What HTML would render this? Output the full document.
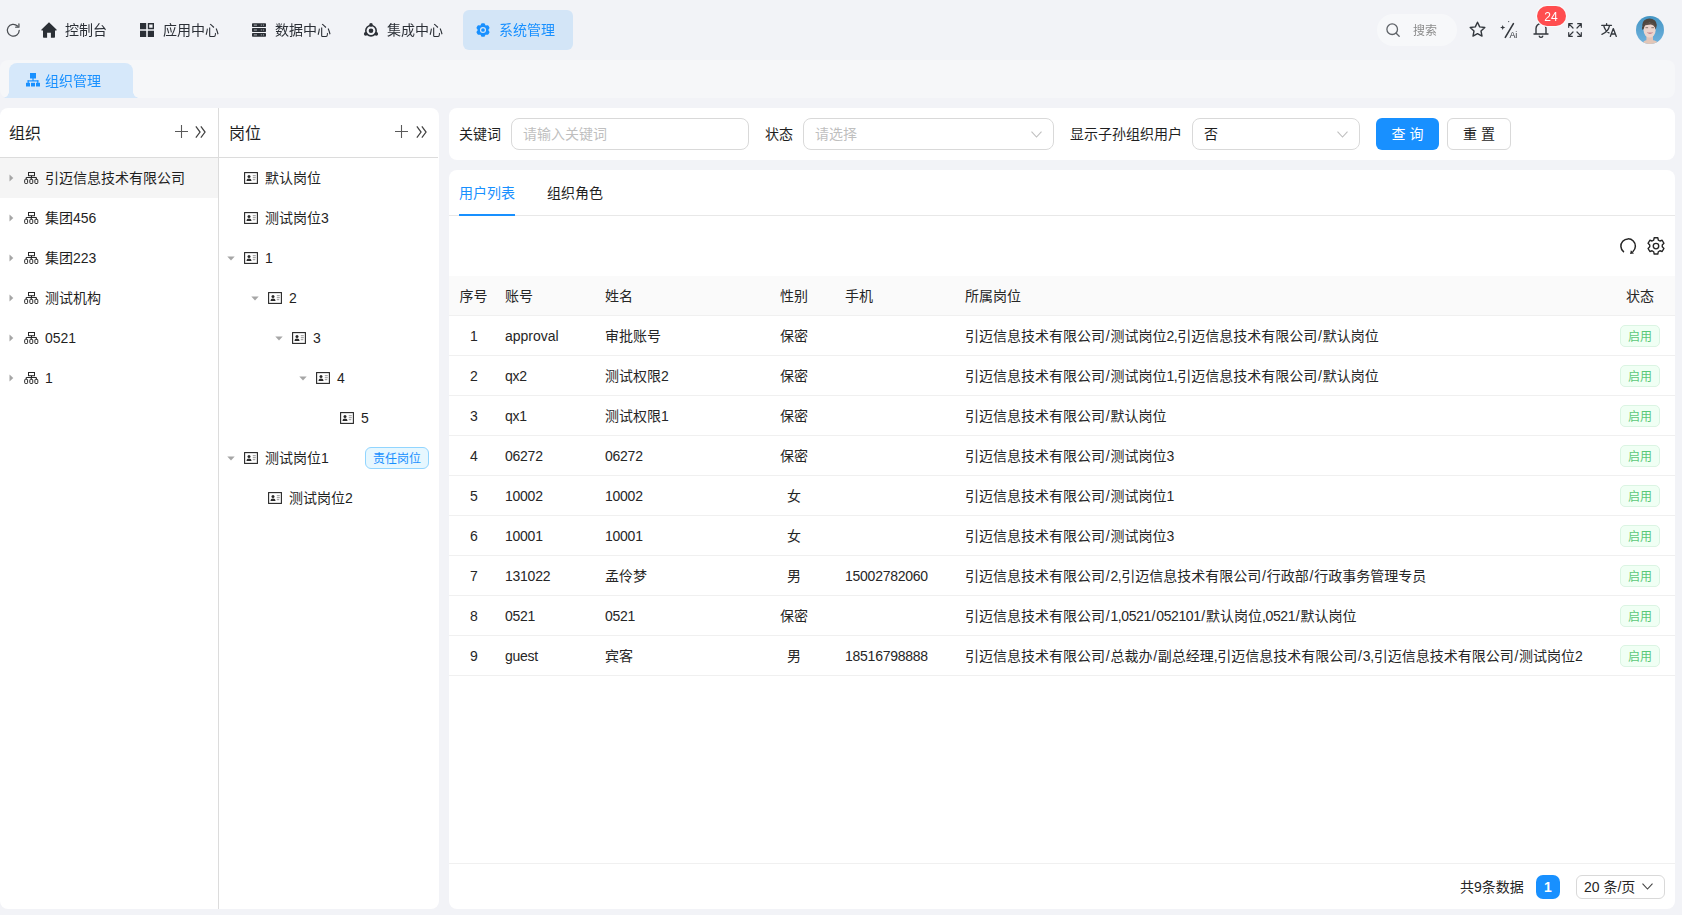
<!DOCTYPE html>
<html lang="zh-CN">
<head>
<meta charset="utf-8">
<title>组织管理</title>
<style>
*{box-sizing:border-box;margin:0;padding:0}
html,body{width:1682px;height:915px;overflow:hidden}
body{background:#f2f3f7;font-family:"Liberation Sans","Noto Sans CJK SC",sans-serif;font-size:14px;color:#1f1f1f;position:relative}
.abs{position:absolute}
svg{display:block;overflow:visible}
.t{position:absolute;white-space:nowrap;line-height:20px;font-size:14px}
.nav{position:absolute;left:0;top:0;width:1682px;height:60px;will-change:transform}
.nav .on{position:absolute;left:463px;top:10px;width:110px;height:40px;border-radius:6px;background:#d3e5f7}
.tabbar{will-change:transform;position:absolute;left:0;top:60px;width:1675px;height:38px;background:#f6f7f9;border-radius:8px}
.ptab{position:absolute;left:9px;top:3px;width:124px;height:35px;background:#d6e8fa;border-radius:8px 8px 0 0;color:#1890ff;font-size:14px}
.ptab:before,.ptab:after{content:"";position:absolute;bottom:0;width:6px;height:6px}
.ptab:before{left:-6px;background:radial-gradient(circle at 0 0,rgba(214,232,250,0) 5.5px,#d6e8fa 6px)}
.ptab:after{right:-6px;background:radial-gradient(circle at 100% 0,rgba(214,232,250,0) 5.5px,#d6e8fa 6px)}
.panel{position:absolute;background:#fff;border-radius:8px;overflow:hidden}
.inp{position:absolute;height:34px;border:1px solid #d9d9d9;border-radius:8px;background:#fff;font-size:14px;line-height:32px;padding-left:11px;color:#bfbfbf;white-space:nowrap}
.btn{position:absolute;height:34px;border-radius:6px;font-size:14px;line-height:32px;text-align:center;white-space:nowrap}
.tr{position:absolute;left:0;width:1226px;height:40px;border-bottom:1px solid #f0f0f0}
.tr span{position:absolute;top:0;line-height:41px;font-size:14px;color:#262626;white-space:nowrap}
.tr .tag{left:1171px;top:9px;width:40px;height:22px;border:1px solid #dbf5e3;background:#f0fff4;border-radius:5px;color:#5ac878;font-size:12px;line-height:22px;text-align:center}

.tr i{font-style:normal;padding:0 .78px}
.tr .n{letter-spacing:-.25px}
.tr b{font-weight:normal;letter-spacing:-.4px}

</style>
</head>
<body>
<div class="nav"><div class="on"></div>
<svg class="abs" style="left:5.800px;top:22.600px" width="14.600" height="14.600" viewBox="0 0 14 14" fill="none" stroke="#4a4d52" stroke-width="1.2" stroke-linecap="round" stroke-linejoin="round"><path d="M12.700 7a5.700 5.700 0 1 1-1.700-4.100"/><path d="M12.400 .9v3.100h-3.100"/></svg>
<svg class="abs" style="left:41px;top:21.700px" width="16" height="16.300" viewBox="0 0 16 16" preserveAspectRatio="none"><path d="M8 .3.500 7.300c-.4.400-.1 1 .4 1H2v6.200c0 .6.400 1 1 1h3.100V10.600h3.800v4.900H13c.6 0 1-.4 1-1V8.300h1.100c.5 0 .8-.6.400-1Z" fill="#2b2f36"/></svg>
<span class="t" style="left:65px;top:20px;font-size:14px;color:#2b2f36;">控制台</span>
<svg class="abs" style="left:140px;top:23px" width="14" height="14" viewBox="0 0 14 14"><path d="M0 0h6.200v6.200H0zM0 7.800h6.200V14H0zM7.800 7.800H14V14H7.800z" fill="#2b2f36"/><path d="M8.500 .7h4.800v4.800H8.500z" fill="none" stroke="#2b2f36" stroke-width="1.400"/></svg>
<span class="t" style="left:163px;top:20px;font-size:14px;color:#2b2f36;">应用中心</span>
<svg class="abs" style="left:252px;top:23px" width="14" height="14" viewBox="0 0 14 14"><g fill="#2b2f36"><rect x="0" y="0.200" width="14" height="3.800" rx=".7"/><rect x="0" y="5.100" width="14" height="3.800" rx=".7"/><rect x="0" y="10" width="14" height="3.800" rx=".7"/></g><g fill="#aeb1b6"><rect x="1.800" y="1.600" width="3.200" height="1"/><rect x="8.800" y="1.600" width="1.100" height="1"/><rect x="10.900" y="1.600" width="1.100" height="1"/><rect x="1.800" y="6.500" width="3.200" height="1"/><rect x="8.800" y="6.500" width="1.100" height="1"/><rect x="10.900" y="6.500" width="1.100" height="1"/><rect x="1.800" y="11.400" width="3.200" height="1"/><rect x="8.800" y="11.400" width="1.100" height="1"/><rect x="10.900" y="11.400" width="1.100" height="1"/></g></svg>
<span class="t" style="left:275px;top:20px;font-size:14px;color:#2b2f36;">数据中心</span>
<svg class="abs" style="left:364px;top:23px" width="14" height="14" viewBox="0 0 14 14"><circle cx="7" cy="7.700" r="5.200" fill="none" stroke="#2b2f36" stroke-width="1.600"/><circle cx="7" cy="7.700" r="2.300" fill="#2b2f36"/><circle cx="7" cy="1.900" r="1.800" fill="#2b2f36"/><circle cx="1.700" cy="10.900" r="1.800" fill="#2b2f36"/><circle cx="12.300" cy="10.900" r="1.800" fill="#2b2f36"/></svg>
<span class="t" style="left:387px;top:20px;font-size:14px;color:#2b2f36;">集成中心</span>
<svg class="abs" style="left:476px;top:23px" width="14" height="14" viewBox="0 0 14 14"><path d="M7.97 0.88 6.03 0.88 4.85 3.28 2.18 3.10 1.21 4.78 2.70 7.00 1.21 9.22 2.18 10.90 4.85 10.72 6.03 13.12 7.97 13.12 9.15 10.72 11.82 10.90 12.79 9.22 11.30 7.00 12.79 4.78 11.82 3.10 9.15 3.28Z" fill="#1890ff" stroke="#1890ff" stroke-width="1.500" stroke-linejoin="round"/><circle cx="7" cy="7" r="2.450" fill="none" stroke="#d3e5f7" stroke-width="1.200"/></svg>
<span class="t" style="left:499px;top:20px;font-size:14px;color:#1890ff;">系统管理</span>
<div class="abs" style="left:1377px;top:14px;width:80px;height:32px;border-radius:16px;background:#f7f8fa"></div>
<svg class="abs" style="left:1386px;top:23px" width="14" height="14" viewBox="0 0 14 14" fill="none" stroke="#5f6368" stroke-width="1.300" stroke-linecap="round"><circle cx="6.200" cy="6.200" r="5.300"/><path d="M10.200 10.200 13.200 13.200"/></svg>
<span class="t" style="left:1413px;top:20.5px;font-size:12px;color:#8c8c8c;">搜索</span>
<svg class="abs" style="left:1469px;top:21px" width="17" height="17" viewBox="0 0 17 17" fill="none" stroke="#33373d" stroke-width="1.400" stroke-linejoin="round"><path d="M8.500 1.200 10.700 5.900 15.800 6.500 12 10 13 15.100 8.500 12.600 4 15.100 5 10 1.200 6.500 6.300 5.900Z"/></svg>
<svg class="abs" style="left:1500px;top:20px" width="19" height="19" viewBox="0 0 19 19"><path d="M5.300 17.400 13.400 3.600" stroke="#33373d" stroke-width="1.600" stroke-linecap="round" fill="none"/><path d="M2.700 4.900 3.400 6.800 5.300 7.500 3.400 8.200 2.700 10.100 2 8.200.1 7.500 2 6.800Z" fill="#33373d"/><circle cx="8.700" cy="1.600" r=".55" fill="#33373d"/></svg>
<span class="t" style="left:1509.500px;top:29px;font-size:9px;line-height:12px;color:#33373d;letter-spacing:-.2px">Ai</span>
<svg class="abs" style="left:1533px;top:21px" width="16" height="17" viewBox="0 0 16 17" fill="none" stroke="#33373d" stroke-width="1.400" stroke-linecap="round" stroke-linejoin="round"><path d="M1 13h14M3 13V7.500a5 5 0 0 1 10 0V13"/><path d="M6.300 15.200a1.800 1.800 0 0 0 3.400 0" /></svg>
<div class="abs" style="left:1536.500px;top:6px;width:29px;height:20px;border-radius:10px;background:#ff4d4f;color:#fff;font-size:12px;line-height:22px;text-align:center;box-shadow:0 0 0 1px #fafbfc">24</div>
<svg class="abs" style="left:1568px;top:23px" width="14" height="14" viewBox="0 0 14 14" fill="none" stroke="#33373d" stroke-width="1.200" stroke-linecap="round" stroke-linejoin="round"><path d="M.7 4.300V.7h3.600M.9.900 5 5M13.300 4.300V.7H9.700M13.100.9 9 5M.7 9.700v3.600h3.600M.9 13.100 5 9M13.300 9.700v3.600H9.700M13.100 13.100 9 9"/></svg>
<svg class="abs" style="left:1601px;top:23px" width="16" height="14" viewBox="0 0 16 14" fill="none" stroke="#33373d" stroke-width="1.300" stroke-linecap="round" stroke-linejoin="round"><path d="M.7 2.300h9.800M5.600.600v1.700M8.600 2.300C7.800 6.500 4.800 9.800.9 11.300M2.700 2.300C3.400 5.700 5.300 8.300 8 9.900"/><path d="M9.300 13.400 12.300 5.600l3 7.800M10.300 11h4"/></svg>
<svg class="abs" style="left:1636px;top:15.800px" width="28" height="28" viewBox="0 0 28 28"><defs><clipPath id="av"><circle cx="14" cy="14" r="14"/></clipPath><linearGradient id="avg" x1="0" y1="0" x2="0" y2="1"><stop offset="0" stop-color="#4495c4"/><stop offset="1" stop-color="#70b2de"/></linearGradient><filter id="avb" x="-10%" y="-10%" width="120%" height="120%"><feGaussianBlur stdDeviation=".45"/></filter></defs><g clip-path="url(#av)"><rect width="28" height="28" fill="url(#avg)"/><g filter="url(#avb)"><path d="M6.700 28c0-2.400 2-3.600 4-3.800h6c2.500.2 5.300 1.400 5.300 3.800z" fill="#e2c6b8"/><path d="M10.400 19h6.600v6h-6.600z" fill="#e3c5b9"/><ellipse cx="13.500" cy="9" rx="7.300" ry="6.600" fill="#4f4740"/><path d="M6.300 10.500c-.6 1.500-.4 3 .6 3.400l1-3z" fill="#4f4740"/><ellipse cx="13.600" cy="14.200" rx="6" ry="7.400" fill="#edd5cd"/><path d="M8 9.500c1.500-3.500 8-4 10.800-.5 1 .8 1.200 2.500 1 4-1.200-2.600-2.800-4.300-5-4.500-2.600.2-5 .6-6.800 1z" fill="#5a5049"/><path d="M9.500 11.700h2.600M15.400 11.700h2.600" stroke="#7d6d66" stroke-width=".9"/><path d="M10.800 16.600c1.700 1.700 4.600 1.700 6.300 0-.4-.3-6-.3-6.300 0z" fill="#b65a68"/><path d="M11.600 16.700h4.700v.6h-4.700z" fill="#f6efe9"/></g></g></svg></div>
<div class="tabbar"><div class="ptab"></div>
<svg class="abs" style="left:26px;top:13px" width="14" height="14" viewBox="0 0 14 14" fill="#1890ff"><rect x="4" y="0" width="6" height="5.500"/><rect x="6.400" y="5" width="1.200" height="3"/><rect x="1.600" y="7.300" width="10.800" height="1.200"/><rect x="1.600" y="7.300" width="1.200" height="3"/><rect x="11.200" y="7.300" width="1.200" height="3"/><rect x="0" y="9.800" width="4" height="3.700"/><rect x="5" y="9.800" width="4" height="3.700"/><rect x="10" y="9.800" width="4" height="3.700"/></svg>
<span class="t" style="left:45px;top:11px;font-size:14px;color:#1890ff;">组织管理</span></div>
<div class="panel" style="left:0;top:108px;width:439px;height:801px"><div class="abs" style="left:218px;top:0;width:1px;height:801px;background:#dcdcdc"></div>
<div class="abs" style="left:0;top:49px;width:438px;height:1px;background:#dcdcdc"></div>
<div class="abs" style="left:0;top:50px;width:218px;height:40px;background:#f5f5f5"></div>
<span class="t" style="left:9px;top:16px;font-size:16px;color:#1f1f1f;">组织</span>
<span class="t" style="left:229px;top:16px;font-size:16px;color:#1f1f1f;">岗位</span>
<svg class="abs" style="left:175px;top:17px" width="13" height="13" viewBox="0 0 13 13" stroke="#595959" stroke-width="1.100" fill="none"><path d="M6.500 0v13M0 6.500h13"/></svg>
<svg class="abs" style="left:195px;top:18px" width="11.500" height="12" viewBox="0 0 11 12" stroke="#434343" stroke-width="1.250" fill="none"><path d="M.6.400 4.800 6 .6 11.600M5.600.400 9.800 6 5.600 11.600"/></svg>
<svg class="abs" style="left:395px;top:17px" width="13" height="13" viewBox="0 0 13 13" stroke="#595959" stroke-width="1.100" fill="none"><path d="M6.500 0v13M0 6.500h13"/></svg>
<svg class="abs" style="left:416px;top:18px" width="11.500" height="12" viewBox="0 0 11 12" stroke="#434343" stroke-width="1.250" fill="none"><path d="M.6.400 4.800 6 .6 11.600M5.600.400 9.800 6 5.600 11.600"/></svg>
<svg class="abs" style="left:9px;top:66px" width="5" height="8" viewBox="0 0 5 8"><path d="M.5.500 4.300 4 .5 7.500Z" fill="#a6a6a6"/></svg>
<svg class="abs" style="left:24px;top:64px" width="14" height="12" viewBox="0 0 14 12" fill="none" stroke="#262626" stroke-width="1"><rect x="4.500" y=".5" width="6" height="3.200"/><path d="M7.500 3.700v1.800M2.200 7.300V5.500h10.200v1.800M7.300 5.500v1.800"/><rect x=".7" y="7.300" width="2.900" height="4.200" rx=".8"/><rect x="5.850" y="7.300" width="2.900" height="4.200" rx=".8"/><rect x="10.900" y="7.300" width="2.900" height="4.200" rx=".8"/></svg>
<span class="t" style="left:45px;top:60px;font-size:14px;color:#1f1f1f;">引迈信息技术有限公司</span>
<svg class="abs" style="left:9px;top:106px" width="5" height="8" viewBox="0 0 5 8"><path d="M.5.500 4.300 4 .5 7.500Z" fill="#a6a6a6"/></svg>
<svg class="abs" style="left:24px;top:104px" width="14" height="12" viewBox="0 0 14 12" fill="none" stroke="#262626" stroke-width="1"><rect x="4.500" y=".5" width="6" height="3.200"/><path d="M7.500 3.700v1.800M2.200 7.300V5.500h10.200v1.800M7.300 5.500v1.800"/><rect x=".7" y="7.300" width="2.900" height="4.200" rx=".8"/><rect x="5.850" y="7.300" width="2.900" height="4.200" rx=".8"/><rect x="10.900" y="7.300" width="2.900" height="4.200" rx=".8"/></svg>
<span class="t" style="left:45px;top:100px;font-size:14px;color:#1f1f1f;">集团456</span>
<svg class="abs" style="left:9px;top:146px" width="5" height="8" viewBox="0 0 5 8"><path d="M.5.500 4.300 4 .5 7.500Z" fill="#a6a6a6"/></svg>
<svg class="abs" style="left:24px;top:144px" width="14" height="12" viewBox="0 0 14 12" fill="none" stroke="#262626" stroke-width="1"><rect x="4.500" y=".5" width="6" height="3.200"/><path d="M7.500 3.700v1.800M2.200 7.300V5.500h10.200v1.800M7.300 5.500v1.800"/><rect x=".7" y="7.300" width="2.900" height="4.200" rx=".8"/><rect x="5.850" y="7.300" width="2.900" height="4.200" rx=".8"/><rect x="10.900" y="7.300" width="2.900" height="4.200" rx=".8"/></svg>
<span class="t" style="left:45px;top:140px;font-size:14px;color:#1f1f1f;">集团223</span>
<svg class="abs" style="left:9px;top:186px" width="5" height="8" viewBox="0 0 5 8"><path d="M.5.500 4.300 4 .5 7.500Z" fill="#a6a6a6"/></svg>
<svg class="abs" style="left:24px;top:184px" width="14" height="12" viewBox="0 0 14 12" fill="none" stroke="#262626" stroke-width="1"><rect x="4.500" y=".5" width="6" height="3.200"/><path d="M7.500 3.700v1.800M2.200 7.300V5.500h10.200v1.800M7.300 5.500v1.800"/><rect x=".7" y="7.300" width="2.900" height="4.200" rx=".8"/><rect x="5.850" y="7.300" width="2.900" height="4.200" rx=".8"/><rect x="10.900" y="7.300" width="2.900" height="4.200" rx=".8"/></svg>
<span class="t" style="left:45px;top:180px;font-size:14px;color:#1f1f1f;">测试机构</span>
<svg class="abs" style="left:9px;top:226px" width="5" height="8" viewBox="0 0 5 8"><path d="M.5.500 4.300 4 .5 7.500Z" fill="#a6a6a6"/></svg>
<svg class="abs" style="left:24px;top:224px" width="14" height="12" viewBox="0 0 14 12" fill="none" stroke="#262626" stroke-width="1"><rect x="4.500" y=".5" width="6" height="3.200"/><path d="M7.500 3.700v1.800M2.200 7.300V5.500h10.200v1.800M7.300 5.500v1.800"/><rect x=".7" y="7.300" width="2.900" height="4.200" rx=".8"/><rect x="5.850" y="7.300" width="2.900" height="4.200" rx=".8"/><rect x="10.900" y="7.300" width="2.900" height="4.200" rx=".8"/></svg>
<span class="t" style="left:45px;top:220px;font-size:14px;color:#1f1f1f;">0521</span>
<svg class="abs" style="left:9px;top:266px" width="5" height="8" viewBox="0 0 5 8"><path d="M.5.500 4.300 4 .5 7.500Z" fill="#a6a6a6"/></svg>
<svg class="abs" style="left:24px;top:264px" width="14" height="12" viewBox="0 0 14 12" fill="none" stroke="#262626" stroke-width="1"><rect x="4.500" y=".5" width="6" height="3.200"/><path d="M7.500 3.700v1.800M2.200 7.300V5.500h10.200v1.800M7.300 5.500v1.800"/><rect x=".7" y="7.300" width="2.900" height="4.200" rx=".8"/><rect x="5.850" y="7.300" width="2.900" height="4.200" rx=".8"/><rect x="10.900" y="7.300" width="2.900" height="4.200" rx=".8"/></svg>
<span class="t" style="left:45px;top:260px;font-size:14px;color:#1f1f1f;">1</span>
<svg class="abs" style="left:244px;top:64px" width="14" height="12" viewBox="0 0 14 12"><rect x=".6" y=".6" width="12.800" height="10.800" fill="none" stroke="#262626" stroke-width="1.100"/><circle cx="5" cy="4.600" r="1.500" fill="#2b2b2b"/><path d="M2.500 9c0-1.700 1-2.500 2.500-2.500S7.500 7.300 7.500 9z" fill="#2b2b2b"/><path d="M8.800 3.700h3M8.800 5.700h3M8.800 7.700h2.500" stroke="#777" stroke-width=".8"/></svg>
<span class="t" style="left:265px;top:60px;font-size:14px;color:#1f1f1f;">默认岗位</span>
<svg class="abs" style="left:244px;top:104px" width="14" height="12" viewBox="0 0 14 12"><rect x=".6" y=".6" width="12.800" height="10.800" fill="none" stroke="#262626" stroke-width="1.100"/><circle cx="5" cy="4.600" r="1.500" fill="#2b2b2b"/><path d="M2.500 9c0-1.700 1-2.500 2.500-2.500S7.500 7.300 7.500 9z" fill="#2b2b2b"/><path d="M8.800 3.700h3M8.800 5.700h3M8.800 7.700h2.500" stroke="#777" stroke-width=".8"/></svg>
<span class="t" style="left:265px;top:100px;font-size:14px;color:#1f1f1f;">测试岗位3</span>
<svg class="abs" style="left:227px;top:148px" width="8" height="5" viewBox="0 0 8 5"><path d="M.3.500h7.400L4 4.500Z" fill="#a6a6a6"/></svg>
<svg class="abs" style="left:244px;top:144px" width="14" height="12" viewBox="0 0 14 12"><rect x=".6" y=".6" width="12.800" height="10.800" fill="none" stroke="#262626" stroke-width="1.100"/><circle cx="5" cy="4.600" r="1.500" fill="#2b2b2b"/><path d="M2.500 9c0-1.700 1-2.500 2.500-2.500S7.500 7.300 7.500 9z" fill="#2b2b2b"/><path d="M8.800 3.700h3M8.800 5.700h3M8.800 7.700h2.500" stroke="#777" stroke-width=".8"/></svg>
<span class="t" style="left:265px;top:140px;font-size:14px;color:#1f1f1f;">1</span>
<svg class="abs" style="left:251px;top:188px" width="8" height="5" viewBox="0 0 8 5"><path d="M.3.500h7.400L4 4.500Z" fill="#a6a6a6"/></svg>
<svg class="abs" style="left:268px;top:184px" width="14" height="12" viewBox="0 0 14 12"><rect x=".6" y=".6" width="12.800" height="10.800" fill="none" stroke="#262626" stroke-width="1.100"/><circle cx="5" cy="4.600" r="1.500" fill="#2b2b2b"/><path d="M2.500 9c0-1.700 1-2.500 2.500-2.500S7.500 7.300 7.500 9z" fill="#2b2b2b"/><path d="M8.800 3.700h3M8.800 5.700h3M8.800 7.700h2.500" stroke="#777" stroke-width=".8"/></svg>
<span class="t" style="left:289px;top:180px;font-size:14px;color:#1f1f1f;">2</span>
<svg class="abs" style="left:275px;top:228px" width="8" height="5" viewBox="0 0 8 5"><path d="M.3.500h7.400L4 4.500Z" fill="#a6a6a6"/></svg>
<svg class="abs" style="left:292px;top:224px" width="14" height="12" viewBox="0 0 14 12"><rect x=".6" y=".6" width="12.800" height="10.800" fill="none" stroke="#262626" stroke-width="1.100"/><circle cx="5" cy="4.600" r="1.500" fill="#2b2b2b"/><path d="M2.500 9c0-1.700 1-2.500 2.500-2.500S7.500 7.300 7.500 9z" fill="#2b2b2b"/><path d="M8.800 3.700h3M8.800 5.700h3M8.800 7.700h2.500" stroke="#777" stroke-width=".8"/></svg>
<span class="t" style="left:313px;top:220px;font-size:14px;color:#1f1f1f;">3</span>
<svg class="abs" style="left:299px;top:268px" width="8" height="5" viewBox="0 0 8 5"><path d="M.3.500h7.400L4 4.500Z" fill="#a6a6a6"/></svg>
<svg class="abs" style="left:316px;top:264px" width="14" height="12" viewBox="0 0 14 12"><rect x=".6" y=".6" width="12.800" height="10.800" fill="none" stroke="#262626" stroke-width="1.100"/><circle cx="5" cy="4.600" r="1.500" fill="#2b2b2b"/><path d="M2.500 9c0-1.700 1-2.500 2.500-2.500S7.500 7.300 7.500 9z" fill="#2b2b2b"/><path d="M8.800 3.700h3M8.800 5.700h3M8.800 7.700h2.500" stroke="#777" stroke-width=".8"/></svg>
<span class="t" style="left:337px;top:260px;font-size:14px;color:#1f1f1f;">4</span>
<svg class="abs" style="left:340px;top:304px" width="14" height="12" viewBox="0 0 14 12"><rect x=".6" y=".6" width="12.800" height="10.800" fill="none" stroke="#262626" stroke-width="1.100"/><circle cx="5" cy="4.600" r="1.500" fill="#2b2b2b"/><path d="M2.500 9c0-1.700 1-2.500 2.500-2.500S7.500 7.300 7.500 9z" fill="#2b2b2b"/><path d="M8.800 3.700h3M8.800 5.700h3M8.800 7.700h2.500" stroke="#777" stroke-width=".8"/></svg>
<span class="t" style="left:361px;top:300px;font-size:14px;color:#1f1f1f;">5</span>
<svg class="abs" style="left:227px;top:348px" width="8" height="5" viewBox="0 0 8 5"><path d="M.3.500h7.400L4 4.500Z" fill="#a6a6a6"/></svg>
<svg class="abs" style="left:244px;top:344px" width="14" height="12" viewBox="0 0 14 12"><rect x=".6" y=".6" width="12.800" height="10.800" fill="none" stroke="#262626" stroke-width="1.100"/><circle cx="5" cy="4.600" r="1.500" fill="#2b2b2b"/><path d="M2.500 9c0-1.700 1-2.500 2.500-2.500S7.500 7.300 7.500 9z" fill="#2b2b2b"/><path d="M8.800 3.700h3M8.800 5.700h3M8.800 7.700h2.500" stroke="#777" stroke-width=".8"/></svg>
<span class="t" style="left:265px;top:340px;font-size:14px;color:#1f1f1f;">测试岗位1</span>
<svg class="abs" style="left:268px;top:384px" width="14" height="12" viewBox="0 0 14 12"><rect x=".6" y=".6" width="12.800" height="10.800" fill="none" stroke="#262626" stroke-width="1.100"/><circle cx="5" cy="4.600" r="1.500" fill="#2b2b2b"/><path d="M2.500 9c0-1.700 1-2.500 2.500-2.500S7.500 7.300 7.500 9z" fill="#2b2b2b"/><path d="M8.800 3.700h3M8.800 5.700h3M8.800 7.700h2.500" stroke="#777" stroke-width=".8"/></svg>
<span class="t" style="left:289px;top:380px;font-size:14px;color:#1f1f1f;">测试岗位2</span>
<div class="abs" style="left:365px;top:339px;width:64px;height:22px;border:1px solid #91d5ff;background:#e6f7ff;border-radius:6px;color:#1890ff;font-size:12px;line-height:22px;text-align:center">责任岗位</div></div>
<div class="panel" style="left:449px;top:108px;width:1226px;height:52px"><span class="t" style="left:10px;top:16px;font-size:14px;color:#1f1f1f;">关键词</span>
<div class="inp" style="left:62px;top:10px;width:238px;height:32px;line-height:30px">请输入关键词</div>
<span class="t" style="left:316px;top:16px;font-size:14px;color:#1f1f1f;">状态</span>
<div class="inp" style="left:354px;top:10px;width:251px;height:32px;line-height:30px">请选择</div>
<svg class="abs" style="left:582px;top:23px" width="11" height="7" viewBox="0 0 11 7" fill="none" stroke="#bfbfbf" stroke-width="1.100"><path d="M.5.600 5.500 6 10.500.600"/></svg>
<span class="t" style="left:621px;top:16px;font-size:14px;color:#1f1f1f;">显示子孙组织用户</span>
<div class="inp" style="left:743px;top:10px;width:168px;height:32px;line-height:30px;color:#1f1f1f">否</div>
<svg class="abs" style="left:888px;top:23px" width="11" height="7" viewBox="0 0 11 7" fill="none" stroke="#bfbfbf" stroke-width="1.100"><path d="M.5.600 5.500 6 10.500.600"/></svg>
<div class="btn" style="left:927px;top:10px;width:63px;height:32px;background:#1890ff;color:#fff;line-height:32px">查 询</div>
<div class="btn" style="left:998px;top:10px;width:64px;height:32px;background:#fff;border:1px solid #d9d9d9;color:#1f1f1f;line-height:30px">重 置</div></div>
<div class="panel" style="left:449px;top:170px;width:1226px;height:739px"><span class="t" style="left:10px;top:13px;font-size:14px;color:#1890ff;">用户列表</span>
<span class="t" style="left:98px;top:13px;font-size:14px;color:#1f1f1f;">组织角色</span>
<div class="abs" style="left:0;top:45px;width:1226px;height:1px;background:#e8e8e8"></div>
<div class="abs" style="left:10px;top:44px;width:56px;height:2px;background:#1890ff"></div>
<svg class="abs" style="left:1170px;top:67px" width="18" height="18" viewBox="0 0 18 18"><path d="M4.500 14.700A7.250 7.250 0 1 1 14 14.500" fill="none" stroke="#262626" stroke-width="1.500" stroke-linecap="round"/><path d="M11.900 13.300 15 16.500 11 16.900Z" fill="#262626"/></svg>
<svg class="abs" style="left:1198px;top:67px" width="18" height="18" viewBox="0 0 18 18" fill="none" stroke="#262626" stroke-width="1.300" stroke-linejoin="round"><g transform="translate(9 9.100) scale(1.060) translate(-9 -8.900)"><path d="M7.300 1h3.400l.5 2.200 1.500.9 2.100-.7 1.700 2.900-1.600 1.500v1.800l1.600 1.500-1.700 2.900-2.100-.7-1.500.9-.5 2.200H7.300l-.5-2.200-1.500-.9-2.100.7-1.700-2.900 1.600-1.500V7.800L1.500 6.300l1.700-2.900 2.100.7 1.500-.9Z"/><circle cx="9" cy="8.900" r="2.600"/></g></svg>
<div class="abs" style="left:0;top:106px;width:1226px;height:40px;background:#fafafa;border-bottom:1px solid #f0f0f0"></div>
<span class="t" style="left:10.5px;top:116px;font-size:14px;color:#262626;">序号</span>
<span class="t" style="left:56px;top:116px;font-size:14px;color:#262626;">账号</span>
<span class="t" style="left:156px;top:116px;font-size:14px;color:#262626;">姓名</span>
<span class="t" style="left:331px;top:116px;font-size:14px;color:#262626;">性别</span>
<span class="t" style="left:396px;top:116px;font-size:14px;color:#262626;">手机</span>
<span class="t" style="left:516px;top:116px;font-size:14px;color:#262626;">所属岗位</span>
<span class="t" style="left:1177px;top:116px;font-size:14px;color:#262626;">状态</span>
<div class="tr" style="top:146px"><span style="left:10px;width:30px;text-align:center">1</span><span style="left:56px">approval</span><span style="left:156px">审批账号</span><span style="left:331px;width:28px;text-align:center">保密</span><span style="left:516px">引迈信息技术有限公司<i>/</i>测试岗位<b>2,</b>引迈信息技术有限公司<i>/</i>默认岗位</span><span class="tag">启用</span></div>
<div class="tr" style="top:186px"><span style="left:10px;width:30px;text-align:center">2</span><span class="n" style="left:56px">qx2</span><span style="left:156px">测试权限2</span><span style="left:331px;width:28px;text-align:center">保密</span><span style="left:516px">引迈信息技术有限公司<i>/</i>测试岗位<b>1,</b>引迈信息技术有限公司<i>/</i>默认岗位</span><span class="tag">启用</span></div>
<div class="tr" style="top:226px"><span style="left:10px;width:30px;text-align:center">3</span><span class="n" style="left:56px">qx1</span><span style="left:156px">测试权限1</span><span style="left:331px;width:28px;text-align:center">保密</span><span style="left:516px">引迈信息技术有限公司<i>/</i>默认岗位</span><span class="tag">启用</span></div>
<div class="tr" style="top:266px"><span style="left:10px;width:30px;text-align:center">4</span><span class="n" style="left:56px">06272</span><span class="n" style="left:156px">06272</span><span style="left:331px;width:28px;text-align:center">保密</span><span style="left:516px">引迈信息技术有限公司<i>/</i>测试岗位<b>3</b></span><span class="tag">启用</span></div>
<div class="tr" style="top:306px"><span style="left:10px;width:30px;text-align:center">5</span><span class="n" style="left:56px">10002</span><span class="n" style="left:156px">10002</span><span style="left:331px;width:28px;text-align:center">女</span><span style="left:516px">引迈信息技术有限公司<i>/</i>测试岗位<b>1</b></span><span class="tag">启用</span></div>
<div class="tr" style="top:346px"><span style="left:10px;width:30px;text-align:center">6</span><span class="n" style="left:56px">10001</span><span class="n" style="left:156px">10001</span><span style="left:331px;width:28px;text-align:center">女</span><span style="left:516px">引迈信息技术有限公司<i>/</i>测试岗位<b>3</b></span><span class="tag">启用</span></div>
<div class="tr" style="top:386px"><span style="left:10px;width:30px;text-align:center">7</span><span class="n" style="left:56px">131022</span><span style="left:156px">孟伶梦</span><span style="left:331px;width:28px;text-align:center">男</span><span class="n" style="left:396px">15002782060</span><span style="left:516px">引迈信息技术有限公司<i>/</i><b>2,</b>引迈信息技术有限公司<i>/</i>行政部<i>/</i>行政事务管理专员</span><span class="tag">启用</span></div>
<div class="tr" style="top:426px"><span style="left:10px;width:30px;text-align:center">8</span><span class="n" style="left:56px">0521</span><span class="n" style="left:156px">0521</span><span style="left:331px;width:28px;text-align:center">保密</span><span style="left:516px">引迈信息技术有限公司<i>/</i><b>1,0521</b><i>/</i><b>052101</b><i>/</i>默认岗位<b>,0521</b><i>/</i>默认岗位</span><span class="tag">启用</span></div>
<div class="tr" style="top:466px"><span style="left:10px;width:30px;text-align:center">9</span><span class="n" style="left:56px">guest</span><span style="left:156px">宾客</span><span style="left:331px;width:28px;text-align:center">男</span><span class="n" style="left:396px">18516798888</span><span style="left:516px">引迈信息技术有限公司<i>/</i>总裁办<i>/</i>副总经理<b>,</b>引迈信息技术有限公司<i>/</i><b>3,</b>引迈信息技术有限公司<i>/</i>测试岗位<b>2</b></span><span class="tag">启用</span></div>
<div class="abs" style="left:0;top:693px;width:1226px;height:1px;background:#f0f0f0"></div>
<span class="t" style="left:1011px;top:707px;font-size:14px;color:#262626;">共9条数据</span>
<div class="abs" style="left:1087px;top:705px;width:24px;height:24px;border-radius:7px;background:#1890ff;color:#fff;font-size:14px;line-height:24px;text-align:center;font-weight:bold">1</div>
<div class="abs" style="left:1127px;top:705px;width:89px;height:24px;border-radius:6px;background:#fff;border:1px solid #d9d9d9"></div>
<span class="t" style="left:1135px;top:707px;font-size:14px;color:#262626;">20 条/页</span>
<svg class="abs" style="left:1193px;top:713px" width="11" height="7" viewBox="0 0 11 7" fill="none" stroke="#434343" stroke-width="1.100"><path d="M.5.600 5.500 6 10.500.600"/></svg></div>
</body>
</html>
